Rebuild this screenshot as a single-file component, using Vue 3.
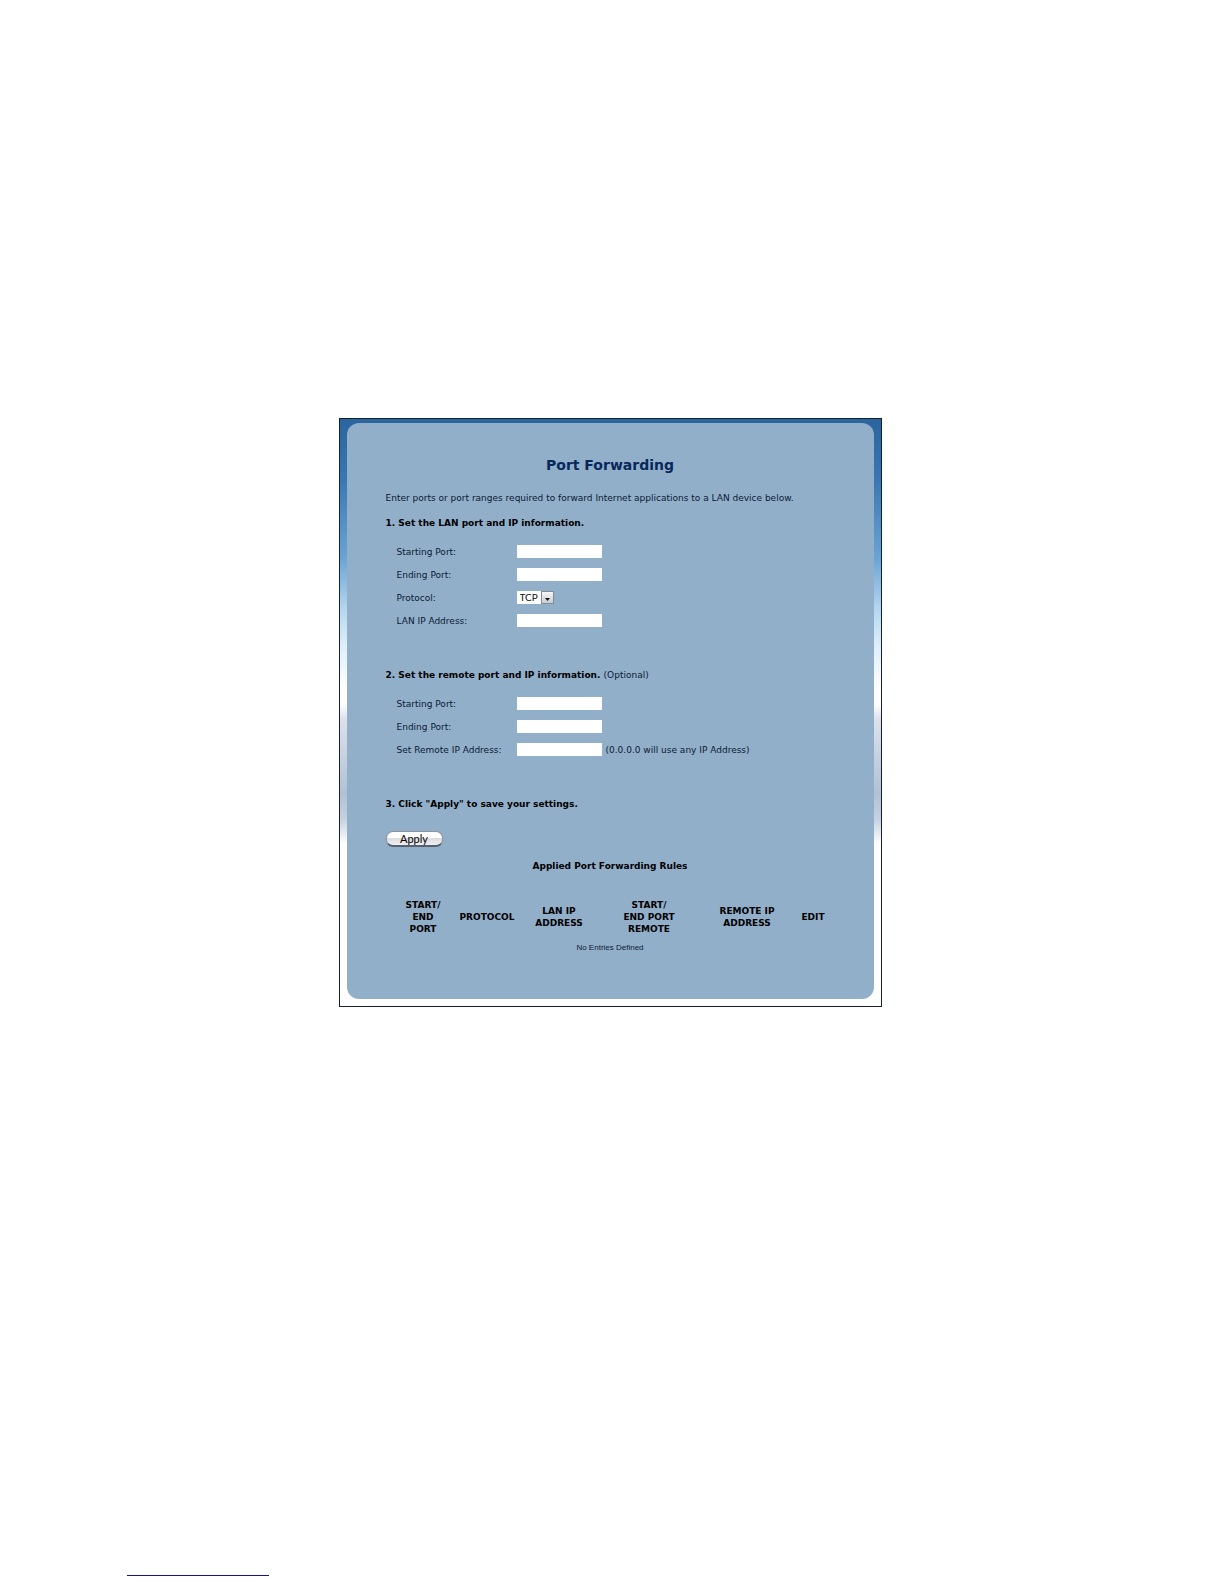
<template>
  <div class="page">
    <main class="frame">
      <form class="panel" @submit.prevent>
        <h1>Port Forwarding</h1>
        <p class="intro">Enter ports or port ranges required to forward Internet applications to a LAN device below.</p>

        <h2>1. Set the LAN port and IP information.</h2>
        <div class="fields">
          <label for="lan-start">Starting Port:</label>
          <input id="lan-start" v-model="lan.start" type="text">
          <label for="lan-end">Ending Port:</label>
          <input id="lan-end" v-model="lan.end" type="text">
          <label for="protocol">Protocol:</label>
          <div class="select-box">
            <select id="protocol" v-model="lan.protocol">
              <option>TCP</option>
              <option>UDP</option>
            </select>
            <span class="arrow">
              <svg width="5" height="3" viewBox="0 0 5 3"><path d="M0 0h5L2.5 3z" fill="#111" /></svg>
            </span>
          </div>
          <label for="lan-ip">LAN IP Address:</label>
          <input id="lan-ip" v-model="lan.ip" type="text">
        </div>

        <h2>2. Set the remote port and IP information. <span class="optional">(Optional)</span></h2>
        <div class="fields">
          <label for="remote-start">Starting Port:</label>
          <input id="remote-start" v-model="remote.start" type="text">
          <label for="remote-end">Ending Port:</label>
          <input id="remote-end" v-model="remote.end" type="text">
          <label for="remote-ip">Set Remote IP Address:</label>
          <div class="with-hint">
            <input id="remote-ip" v-model="remote.ip" type="text">
            <span>(0.0.0.0 will use any IP Address)</span>
          </div>
        </div>

        <h2>3. Click "Apply" to save your settings.</h2>
        <button type="submit" class="apply">Apply</button>

        <table class="rules">
          <caption>Applied Port Forwarding Rules</caption>
          <colgroup>
            <col v-for="col in columns" :key="col.key" :class="col.key">
          </colgroup>
          <thead>
            <tr>
              <th v-for="col in columns" :key="col.key" scope="col">
                <template v-for="(line, i) in col.lines" :key="i"><br v-if="i">{{ line }}</template>
              </th>
            </tr>
          </thead>
          <tbody>
            <tr>
              <td :colspan="columns.length">No Entries Defined</td>
            </tr>
          </tbody>
        </table>
      </form>
    </main>

    <footer>
      <a href="#" class="footer-link" aria-label="Website"></a>
    </footer>
  </div>
</template>

<script setup>
import { reactive } from 'vue'

const lan = reactive({ start: '', end: '', protocol: 'TCP', ip: '' })
const remote = reactive({ start: '', end: '', ip: '' })

const columns = [
  { key: 'lan-port', lines: ['START/', 'END', 'PORT'] },
  { key: 'proto', lines: ['PROTOCOL'] },
  { key: 'lan-addr', lines: ['LAN IP', 'ADDRESS'] },
  { key: 'remote-port', lines: ['START/', 'END PORT', 'REMOTE'] },
  { key: 'remote-addr', lines: ['REMOTE IP', 'ADDRESS'] },
  { key: 'edit', lines: ['EDIT'] }
]
</script>

<style>
body {
  background: #fff;
}
</style>

<style scoped>
.page {
  box-sizing: border-box;
  min-height: 100vh;
  display: flex;
  flex-direction: column;
  padding: 418px 131px 8px 127px;
  font-family: "DejaVu Sans", Verdana, sans-serif;
  font-size: 9px;
  line-height: 12px;
  color: #0b1a33;
}

.frame {
  box-sizing: border-box;
  width: 100%;
  max-width: 543px;
  margin: 0 auto;
  padding: 4px 7px 7px;
  border: 1px solid #16202c;
  background: linear-gradient(
    #2a659f 0,
    #3a76b2 60px,
    #6ba5d6 140px,
    #b5d6ef 190px,
    #dceefa 225px,
    #fff 270px,
    #fff 285px,
    #dde1ec 300px,
    #b1c1d5 375px,
    #c5d1e0 400px,
    #fff 425px
  );
}

.panel {
  padding: 33px 39px 46px;
  border-radius: 12px;
  background: #92afca;
}

h1 {
  margin: 0 0 18px;
  font-size: 14px;
  line-height: 18px;
  text-align: center;
  color: #08285c;
}

.intro {
  margin: 0 0 12px;
}

h2 {
  margin: 0;
  font-size: 9px;
  line-height: 14px;
  color: #000;
}

.optional {
  font-weight: normal;
  color: #0b1a33;
}

.fields {
  display: grid;
  grid-template-columns: 120px 1fr;
  row-gap: 10px;
  align-items: center;
  padding: 15px 0 41px 11px;
}

input {
  box-sizing: border-box;
  width: 85px;
  height: 13px;
  padding: 0 2px;
  border: 0;
  font: inherit;
  background: #fff;
}

.select-box {
  display: grid;
  grid-template-columns: 24px 13px;
  height: 13px;
  width: 37px;
}

select {
  grid-area: 1 / 1 / 2 / 3;
  appearance: none;
  height: 13px;
  padding: 0 13px 0 3px;
  border: 0;
  border-radius: 0;
  font-family: Lato, sans-serif;
  font-size: 10px;
  line-height: 13px;
  color: #111;
  background: #fff;
}

.arrow {
  grid-area: 1 / 2;
  display: flex;
  align-items: flex-end;
  justify-content: center;
  padding-bottom: 2px;
  border: 1px solid #7f8c99;
  background: linear-gradient(#f7f7f7, #c9ccd0);
  pointer-events: none;
}

.with-hint {
  display: flex;
  align-items: center;
  gap: 4px;
}

.apply {
  display: block;
  width: 57px;
  height: 16px;
  margin: 20px 0 12px;
  padding: 0;
  border: 1px solid #8b95a1;
  border-bottom: 2px solid #56616f;
  border-radius: 7px;
  font-family: Lato, sans-serif;
  font-size: 11px;
  line-height: 12px;
  color: #000;
  background: linear-gradient(#fff 45%, #dcdcdf 50%, #f0f0f2);
}

.rules {
  width: 440px;
  margin: 0 auto;
  border-collapse: collapse;
  table-layout: fixed;
  text-align: center;
}

caption {
  padding-bottom: 26px;
  font-weight: bold;
  line-height: 14px;
  color: #000;
}

th,
td {
  padding: 0;
}

th {
  line-height: 12px;
  color: #000;
}

td {
  padding-top: 8px;
  font-family: "Liberation Sans", sans-serif;
  font-size: 8px;
  line-height: 10px;
}

.lan-port {
  width: 66px;
}

.proto {
  width: 62px;
}

.lan-addr {
  width: 82px;
}

.remote-port,
.remote-addr {
  width: 98px;
}

.edit {
  width: 34px;
}

footer {
  margin-top: auto;
}

.footer-link {
  display: block;
  width: 142px;
  border-bottom: 1px solid #14148c;
}
</style>
